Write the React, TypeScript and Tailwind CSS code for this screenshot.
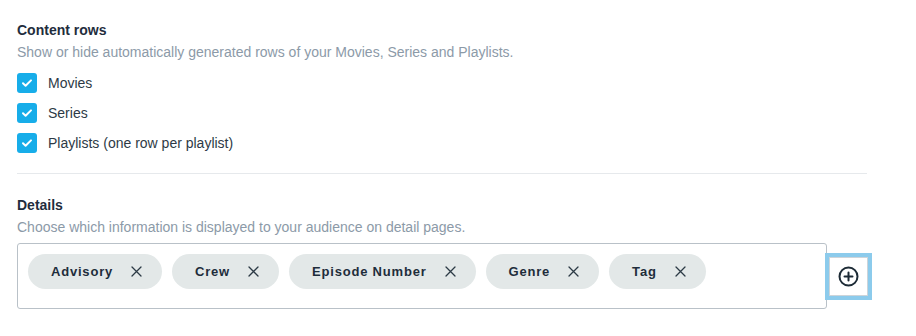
import React, { useState } from 'react';

const contentRows = [
  { id: 'movies', label: 'Movies' },
  { id: 'series', label: 'Series' },
  { id: 'playlists', label: 'Playlists (one row per playlist)' },
];

const initialDetails = ['Advisory', 'Crew', 'Episode Number', 'Genre', 'Tag'];

const CheckIcon: React.FC = () => (
  <svg width="12" height="12" viewBox="0 0 12 12" fill="none">
    <path d="M2 6.3l2.6 2.5L10 3.4" stroke="#fff" strokeWidth="2" strokeLinecap="round" strokeLinejoin="round" />
  </svg>
);

const CloseIcon: React.FC = () => (
  <svg width="11" height="11" viewBox="0 0 11 11" fill="none">
    <path d="M1 1l9 9M10 1l-9 9" stroke="#2c3a45" strokeWidth="1.3" strokeLinecap="round" />
  </svg>
);

const PlusCircleIcon: React.FC = () => (
  <svg width="21" height="21" viewBox="0 0 21 21" fill="none">
    <circle cx="10.5" cy="10.5" r="9" stroke="#1d2b36" strokeWidth="2" />
    <path d="M10.5 6.5v8M6.5 10.5h8" stroke="#1d2b36" strokeWidth="2" strokeLinecap="round" />
  </svg>
);

const App: React.FC = () => {
  const [checked, setChecked] = useState<Record<string, boolean>>({ movies: true, series: true, playlists: true });
  const [details, setDetails] = useState<string[]>(initialDetails);

  const toggle = (id: string) => setChecked((prev) => ({ ...prev, [id]: !prev[id] }));
  const removeDetail = (name: string) => setDetails((prev) => prev.filter((d) => d !== name));

  return (
    <div className="w-[916px] h-[336px] bg-white overflow-hidden font-['Liberation_Sans',Arial,sans-serif]">
      <div className="w-[850px] ml-[17px] pt-[20px]">
        <section className="flex flex-col">
          <h2 className="text-[14px] leading-[20px] font-bold text-[#1f2d3d]">Content rows</h2>
          <p className="mt-[2px] text-[14px] leading-[20px] text-[#8c9aa8]">
            Show or hide automatically generated rows of your Movies, Series and Playlists.
          </p>
          <div className="mt-[11px] flex flex-col gap-[10px]">
            {contentRows.map((row) => (
              <label key={row.id} className="flex items-center cursor-pointer">
                <button
                  type="button"
                  onClick={() => toggle(row.id)}
                  className={`w-5 h-5 rounded-[3px] flex items-center justify-center ${
                    checked[row.id] ? 'bg-[#17ade9]' : 'bg-white border border-[#b8c0c8]'
                  }`}
                >
                  {checked[row.id] && <CheckIcon />}
                </button>
                <span className="ml-[11px] text-[14px] leading-[20px] text-[#2d3a46]">{row.label}</span>
              </label>
            ))}
          </div>
        </section>

        <div className="mt-[20px] h-px bg-[#e6e9ec]" />

        <section className="mt-[21px] flex flex-col">
          <h2 className="text-[14px] leading-[20px] font-bold text-[#1f2d3d]">Details</h2>
          <p className="mt-[2px] text-[14px] leading-[20px] text-[#8c9aa8]">
            Choose which information is displayed to your audience on detail pages.
          </p>
          <div className="mt-[6px] flex items-center">
            <div className="shrink-0 w-[810px] h-[66px] border border-[#b9c1c8] rounded-[3px] pt-[10px] px-[10px] flex flex-wrap items-start gap-[10px]">
              {details.map((name) => (
                <span
                  key={name}
                  className="h-[35px] rounded-full bg-[#e3e8e8] pl-[23px] pr-[20px] flex items-center gap-[18px]"
                >
                  <span className="text-[13px] font-bold tracking-[0.8px] text-[#1e2d3b]">{name}</span>
                  <button type="button" onClick={() => removeDetail(name)} className="flex items-center">
                    <CloseIcon />
                  </button>
                </span>
              ))}
            </div>
            <button
              type="button"
              className="shrink-0 -ml-[2px] w-[47px] h-[47px] border-[4px] border-[#8ccbec] bg-white flex items-center justify-center"
            >
              <span className="w-full h-full border border-[#cdd4d9] flex items-center justify-center">
                <PlusCircleIcon />
              </span>
            </button>
          </div>
        </section>
      </div>
    </div>
  );
};

export default App;
